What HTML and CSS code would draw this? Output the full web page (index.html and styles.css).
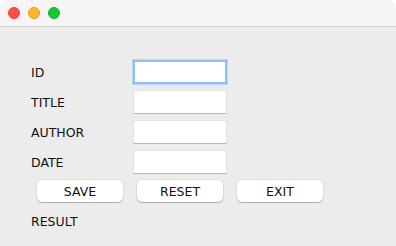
FILE: index.html
```html
<!DOCTYPE html>
<html lang="en">
<head>
<meta charset="UTF-8">
<title>Book Form</title>
<link rel="stylesheet" href="styles.css">
</head>
<body>

<div class="window">
<div class="titlebar">
<span class="light red"></span>
<span class="light yellow"></span>
<span class="light green"></span>
</div>

<div class="content">
<div class="form">
<label for="id">ID</label>
<input id="id" class="focused">
<label for="title">TITLE</label>
<input id="title">
<label for="author">AUTHOR</label>
<input id="author">
<label for="date">DATE</label>
<input id="date">
</div>

<div class="buttons">
<button>SAVE</button>
<button>RESET</button>
<button>EXIT</button>
</div>

<div class="result">RESULT</div>
</div>
</div>

</body>
</html>
```

FILE: styles.css
```css
*{box-sizing:border-box}
body{margin:0;background:#fff;font-family:"DejaVu Sans",sans-serif;font-size:12.5px;color:#111}

.window{width:396px;height:246px;background:#ececec;border-radius:10px 10px 0 0;overflow:hidden}
.titlebar{height:27px;background:#f6f4f4;border-bottom:1px solid #d2d0d0;display:flex;gap:8px;padding:7px 0 0 8px}
.light{width:12px;height:12px;border-radius:50%}
.red{background:#fe4d4a;border:0.5px solid #e5403c}
.yellow{background:#fdb52a;border:0.5px solid #e09f1f}
.green{background:#18c832;border:0.5px solid #13ab28}

.content{padding:33px 0 0 31px}
.form{display:grid;grid-template-columns:102px 94px;grid-auto-rows:24px;row-gap:6px;align-items:center}
.form input{height:24px;width:94px;border:1px solid #e2e2e2;border-bottom-color:#b8b8b8;background:#fff;padding:0 4px;font:inherit;outline:none}
.form input.focused{border:2px solid #90c0f7;box-shadow:0 0 0 1px #b7d5f8}

.buttons{display:flex;gap:14px;margin:6px 0 0 6px}
.buttons button{width:86px;height:22px;background:#fff;border:none;border-radius:5px;font:inherit;color:#111;padding:0;
box-shadow:0 0 0 0.5px rgba(0,0,0,.12),0 1px 1px rgba(0,0,0,.22)}

.result{height:24px;line-height:24px;margin-top:8px}
```
